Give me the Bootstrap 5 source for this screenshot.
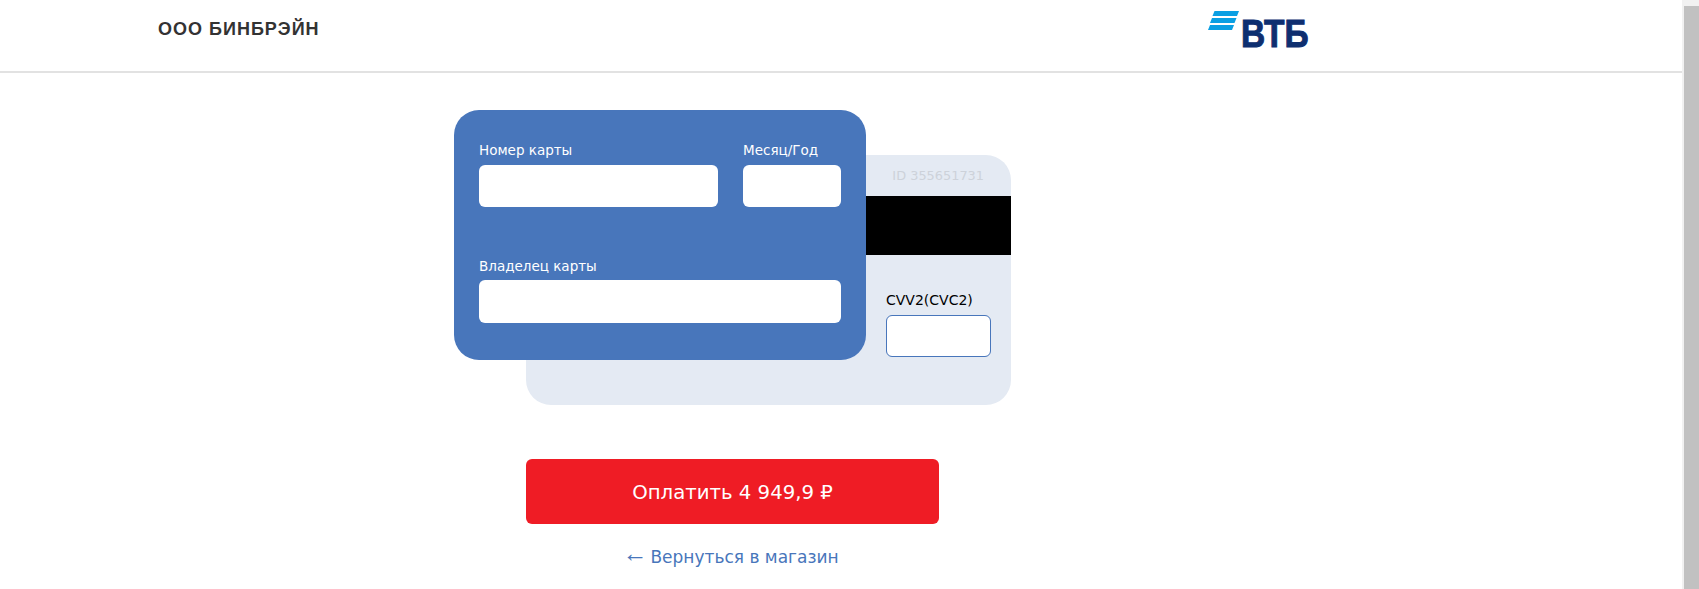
<!DOCTYPE html>
<html lang="ru">
<head>
  <meta charset="UTF-8">
  <title>Оплата</title>
  <meta name="viewport" content="width=device-width, initial-scale=1">
  <link href="https://cdn.jsdelivr.net/npm/bootstrap@5.3.0/dist/css/bootstrap.min.css" rel="stylesheet">
  <style>
    html, body {
      height: 589px;
      overflow: hidden;
    }
    body {
      font-family: "DejaVu Sans", sans-serif;
      background-color: #fff;
    }
    .page-main {
      width: 1682px;
    }
    .fake-scroll {
      width: 17px;
      height: 589px;
      background-color: #f1f1f1;
      padding: 6px 0 0 2px;
    }
    .fake-thumb {
      height: 100%;
      background-color: #c1c1c1;
    }
    .top-bar {
      height: 73px;
      border-bottom: 2px solid #e2e2e2;
      padding-left: 158px;
    }
    .shop-name {
      width: 1050px;
      padding-top: 17px;
      font-family: "Liberation Sans", sans-serif;
      font-weight: 700;
      font-size: 18px;
      line-height: 24px;
      letter-spacing: 1px;
      color: #333;
    }
    .bank-logo {
      display: block;
      margin-top: 1px;
    }
    .pay-area {
      margin-left: 454px;
      width: 557px;
      padding-top: 37px;
    }
    .card-stack {
      display: grid;
    }
    .card-front, .card-back {
      grid-area: 1 / 1;
      height: 250px;
    }
    .card-front {
      z-index: 2;
      width: 412px;
      background-color: #4876bb;
      border-radius: 25px;
      padding: 30px 25px 0;
      color: #fff;
    }
    .card-back {
      margin: 45px 0 0 72px;
      background-color: #e4eaf3;
      border-radius: 25px;
      overflow: hidden;
    }
    .card-id {
      height: 41px;
      padding-right: 27px;
      font-size: 12.9px;
      color: #cdd2da;
    }
    .card-strip {
      height: 59px;
      background-color: #000;
    }
    .cvv-box {
      margin: 35px 0 0 360px;
      width: 105px;
    }
    .field-label {
      display: block;
      height: 20px;
      line-height: 20px;
      margin-bottom: 5px;
      font-size: 13.5px;
    }
    .cvv-box .field-label {
      font-size: 14px;
      color: #000;
    }
    .field-input {
      height: 42px;
      padding: 0 10px;
      border: 0;
      border-radius: 6px;
    }
    .cvv-box .field-input {
      border: 1px solid #4876bb;
    }
    .num-col { width: 239px; }
    .date-col { width: 98px; }
    .owner-row { margin-top: 49px; }
    .owner-row .field-label { margin-bottom: 4px; }
    .owner-row .field-input { height: 43px; }
    .pay-btn {
      display: block;
      width: 413px;
      height: 65px;
      margin: 54px 0 0 72px;
      padding-top: 8px;
      background-color: #ef1c25;
      border: 0;
      border-radius: 6px;
      color: #fff;
      font-size: 19.7px;
    }
    .back-link {
      display: flex;
      justify-content: center;
      align-items: center;
      gap: 3px;
      width: 409px;
      height: 22px;
      margin: 22px 0 0 72px;
      text-decoration: none;
      color: #4876bb;
      font-size: 17px;
      line-height: 22px;
    }
    .back-arrow {
      font-family: "Liberation Serif", serif;
      font-size: 25px;
      line-height: 22px;
      padding-bottom: 6px;
    }
  </style>
</head>
<body>

<div class="d-flex">
  <div class="page-main">
    <!-- Header -->
    <header class="top-bar d-flex align-items-start">
      <div class="shop-name">ООО БИНБРЭЙН</div>
      <svg class="bank-logo" width="110" height="52" viewBox="0 0 110 52" role="img" aria-label="ВТБ">
        <polygon fill="#0a9fe3" points="6.5,10 31,10 29,15 4.5,15"/>
        <polygon fill="#0a9fe3" points="4,17 28.5,17 26.5,22 2,22"/>
        <polygon fill="#0a9fe3" points="2,24 26,24 24,29 0,29"/>
        <text x="33" y="46" textLength="67.5" lengthAdjust="spacingAndGlyphs" font-family="Liberation Sans" font-weight="700" font-size="39" fill="#0e2f70" stroke="#0e2f70" stroke-width="1">ВТБ</text>
      </svg>
    </header>

    <main class="pay-area">
      <form>
        <div class="card-stack">
          <!-- Front side -->
          <div class="card-front">
            <div class="d-flex justify-content-between">
              <div class="num-col">
                <label class="field-label" for="cardNumber">Номер карты</label>
                <input type="text" class="form-control field-input" id="cardNumber">
              </div>
              <div class="date-col">
                <label class="field-label" for="cardDate">Месяц/Год</label>
                <input type="text" class="form-control field-input" id="cardDate">
              </div>
            </div>
            <div class="owner-row">
              <label class="field-label" for="cardOwner">Владелец карты</label>
              <input type="text" class="form-control field-input" id="cardOwner">
            </div>
          </div>
          <!-- Back side -->
          <div class="card-back">
            <div class="card-id d-flex align-items-center justify-content-end">ID 355651731</div>
            <div class="card-strip"></div>
            <div class="cvv-box">
              <label class="field-label" for="cardCvv">CVV2(CVC2)</label>
              <input type="text" class="form-control field-input" id="cardCvv">
            </div>
          </div>
        </div>

        <button type="button" class="btn pay-btn">Оплатить 4 949,9 ₽</button>
        <a href="#" class="back-link"><span class="back-arrow">←</span><span>Вернуться в магазин</span></a>
      </form>
    </main>
  </div>

  <div class="fake-scroll"><div class="fake-thumb"></div></div>
</div>

<script src="https://cdn.jsdelivr.net/npm/bootstrap@5.3.0/dist/js/bootstrap.bundle.min.js"></script>
</body>
</html>
